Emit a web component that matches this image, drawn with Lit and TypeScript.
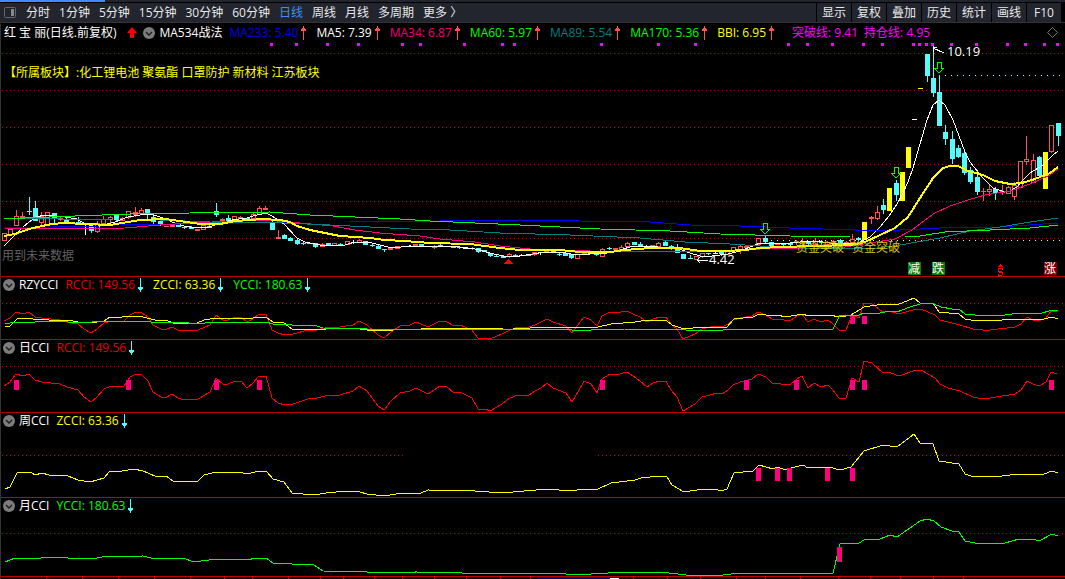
import { LitElement, html, svg, css } from "lit";
import { customElement, property } from "lit/decorators.js";
import { styleMap } from "lit/directives/style-map.js";

interface Reading {
  label: string;
  value: string;
  color: string;
  trend?: "up" | "down";
}

const PERIODS = ["分时", "1分钟", "5分钟", "15分钟", "30分钟", "60分钟", "日线", "周线", "月线", "多周期", "更多 〉"];
const TOOLS = ["显示", "复权", "叠加", "历史", "统计", "画线", "F10"];

const AVERAGES: Reading[] = [
  { label: "MA233", value: "5.40", color: "#0000e6", trend: "up" },
  { label: "MA5", value: "7.39", color: "#ffffff", trend: "up" },
  { label: "MA34", value: "6.87", color: "#f0007a", trend: "up" },
  { label: "MA60", value: "5.97", color: "#00ff00", trend: "up" },
  { label: "MA89", value: "5.54", color: "#008080", trend: "up" },
  { label: "MA170", value: "5.36", color: "#00ff00", trend: "up" },
  { label: "BBI", value: "6.95", color: "#ffff00", trend: "up" },
];
const LEVELS: Reading[] = [
  { label: "突破线", value: "9.41", color: "#ff00ff" },
  { label: "持仓线", value: "4.95", color: "#ff00ff" },
];
const RCCI: Reading = { label: "RCCI", value: "149.56", color: "#e60000", trend: "down" };
const ZCCI: Reading = { label: "ZCCI", value: "63.36", color: "#ffff00", trend: "down" };
const YCCI: Reading = { label: "YCCI", value: "180.63", color: "#00ff00", trend: "down" };

// Line series, "x,y" pairs
const MA5 = "4,246 10,240 22,228 29,222 36,217 45,215 65,217 77,219 85,224 97,227 103,225 115,222 128,217 140,215 150,214 160,217 172,222 184,226 197,228 209,227 220,223 232,220 247,218 253,216 266,213 272,216 284,224 297,238 305,242 320,245 345,245 355,242 368,242 380,245 392,248 410,246 460,247 475,249 490,253 503,256 520,256 533,254 546,252 560,252 577,255 590,254 607,253 620,250 633,246 650,246 665,248 677,248 690,253 700,256 712,256 728,254 740,251 750,247 760,243 790,243 800,242 815,241 830,243 850,243 858,243 870,237 880,227 889,216 897,204 902,195 908,182 913,168 927,120 933,105 939,100 945,105 953,120 965,152 970,162 983,178 993,188 1002,191 1010,191 1017,187 1022,181 1030,173 1043,165 1053,155 1058,151";
const BBI = "4,236 15,234 29,229 42,226 52,224 65,223 85,224 110,225 128,222 140,220 165,219 180,221 200,224 220,224 235,221 250,220 262,219 280,220 290,222 297,226 310,230 325,233 340,236 370,238 385,240 405,241 430,243 470,244 485,246 500,248 520,250 560,250 580,252 610,252 625,250 650,248 680,248 700,251 725,251 745,250 760,248 780,247 850,245 865,242 880,235 895,228 908,217 920,198 933,178 943,168 950,166 958,166 968,171 983,175 995,181 1010,184 1022,183 1035,179 1050,173 1058,167";
const MA34 = "4,228 72,229 125,228 160,225 190,223 235,221 265,220 300,223 333,226 355,230 380,233 420,236 440,239 475,242 500,246 530,249 590,251 635,251 680,252 740,250 780,248 790,249 845,247 870,243 895,239 912,230 933,214 950,206 968,200 985,195 1010,191 1030,184 1050,175 1058,169";
const MA233 = "4,228 50,227 100,226 130,224 180,224 240,223 290,222 350,222 360,221 440,221 520,220 580,221 650,222 690,225 740,226 790,228 855,230 900,230 940,228 1000,227 1058,223";
const MA170 = "4,219 25,218 75,216 130,214 190,213 270,212 310,215 400,219 430,221 520,225 560,227 600,229 670,231 720,234 790,236 850,237 905,237 920,236 945,232 990,230 1030,228 1058,225";
const MA89 = "4,218 60,219 110,220 160,220 210,222 260,222 330,225 410,229 450,230 500,233 570,235 640,238 685,242 730,244 760,246 800,248 870,249 900,245 940,238 970,231 1000,227 1030,222 1058,218";

const DAY = "4,386 10,382 16,374 23,376 29,374 35,380 42,382 60,384 67,387 78,390 84,397 91,402 97,397 104,389 111,386 124,386 130,377 136,374 142,375 148,381 153,392 161,397 167,397 172,394 178,398 184,400 198,399 210,392 216,378 223,384 228,384 235,381 241,381 247,388 253,383 259,376 266,376 272,398 278,403 285,405 293,404 308,399 317,398 325,396 340,395 353,391 359,386 367,391 378,406 384,410 391,401 400,393 410,391 416,388 428,394 440,386 447,387 454,393 460,392 472,398 478,409 485,409 490,411 502,404 510,398 518,395 529,395 535,391 541,388 547,383 553,388 566,393 572,402 578,392 584,381 591,384 597,393 602,379 610,374 616,375 627,372 633,376 640,381 647,387 653,383 660,381 666,381 671,390 677,397 683,411 695,404 702,397 710,395 717,393 722,394 728,390 733,385 740,382 752,379 758,374 766,377 772,383 778,383 784,385 791,384 797,379 802,376 808,388 814,383 821,387 828,385 833,390 839,398 846,398 852,378 859,382 864,361 872,363 883,373 889,372 896,375 902,375 913,371 921,370 928,374 935,378 940,384 948,388 960,391 973,397 983,399 990,398 1015,394 1021,390 1027,381 1033,384 1039,386 1046,382 1051,372 1057,374";
const WEEK = "5,489 10,487 17,473 31,472 35,475 42,473 49,475 68,476 78,480 90,482 104,478 110,471 122,471 134,469 143,471 155,476 166,476 173,481 197,482 204,475 216,472 232,473 238,472 248,474 258,471 267,472 273,479 284,482 292,493 314,495 326,493 346,491 360,492 367,494 385,496 401,493 421,493 428,490 475,491 503,493 513,492 547,489 570,491 584,489 598,489 611,483 635,480 641,478 659,476 667,477 672,485 684,492 703,489 715,489 721,491 727,489 734,473 753,471 759,465 773,469 778,467 785,470 791,468 803,465 808,468 829,467 840,470 851,467 864,451 883,445 897,447 914,434 920,443 933,444 939,461 959,464 965,474 971,476 1002,476 1019,474 1044,474 1052,471 1058,473";
const MONTH = "5,562 15,558 35,559 48,557 68,558 92,559 102,557 143,556 151,558 183,558 194,562 216,559 228,560 238,559 246,560 257,558 266,558 273,563 292,564 314,565 323,571 367,572 384,573 416,572 462,573 489,574 510,573 560,573 572,575 591,574 625,572 645,573 660,572 669,573 686,575 723,575 740,573 815,573 833,573 840,544 859,543 864,540 880,539 890,535 897,537 910,528 920,521 927,519 934,521 941,527 952,531 959,532 965,541 975,543 1005,543 1019,539 1033,539 1039,541 1052,534 1058,536";

// Candles: x, high, body top, body bottom, low, kind
// r rising, f rising and filled, c falling, y limit-up, w unchanged
type Kind = "r" | "f" | "c" | "y" | "w";
const CANDLES: [number, number, number, number, number, Kind][] = (
  "4 233 233 241 241 r;10 229 229 235 235 r;16 210 216 226 226 r;22 212 216 218 218 r;29 197 211 212 215 c;35 201 208 221 221 c;41 212 216 223 225 r;47 212 212 225 225 r;54 213 213 219 224 c;60 216 218 220 221 r;66 217 219 222 223 c;72 222 222 224 224 r;78 217 222 225 225 c;85 225 226 227 235 w;91 226 226 231 233 c;97 221 223 232 233 r;103 216 219 224 224 r;110 216 217 220 224 r;116 215 215 220 222 c;122 217 218 221 221 r;128 211 211 218 219 r;135 207 212 215 217 r;141 208 210 214 214 r;147 209 209 215 219 c;153 214 217 222 224 c;160 220 221 225 226 c;166 226 226 227 227 r;172 224 225 227 227 r;178 224 224 227 227 c;184 227 227 228 229 c;191 226 227 229 229 c;197 229 229 231 231 f;203 224 225 230 230 r;209 225 226 228 228 c;216 203 211 215 217 c;222 218 219 221 221 r;228 215 218 221 222 c;234 216 216 220 220 r;240 216 217 222 223 r;247 217 218 220 221 c;253 213 214 219 220 r;259 206 208 215 215 r;265 206 208 210 210 f;272 221 223 230 230 c;278 230 237 239 239 r;284 234 235 239 239 c;290 237 238 241 241 c;297 238 240 244 245 c;303 241 243 244 245 c;309 242 243 244 244 c;315 243 243 247 248 c;322 243 244 247 247 r;328 243 243 245 245 c;334 243 243 246 246 r;340 243 244 245 245 c;347 241 241 245 245 r;353 240 242 243 244 w;359 239 240 243 243 r;365 241 241 245 245 c;372 244 245 246 247 c;378 245 246 249 249 c;384 249 249 250 252 c;390 248 248 250 250 f;397 246 246 249 249 r;403 246 246 247 247 f;409 245 246 247 247 w;415 244 244 246 246 r;421 244 244 246 247 c;428 246 246 247 247 f;434 245 246 248 249 r;440 244 245 246 247 c;446 246 246 247 247 c;453 246 247 248 248 c;459 246 247 248 249 c;465 247 248 249 249 w;472 247 248 249 250 r;478 248 248 252 253 c;484 250 250 252 252 c;490 253 253 256 257 c;496 254 256 257 257 c;503 255 256 258 258 c;509 253 254 257 258 r;515 254 255 256 256 c;521 254 255 256 256 w;528 254 255 256 256 c;534 252 252 255 256 r;540 252 252 253 255 w;546 251 251 253 253 r;553 250 251 252 253 c;559 253 254 255 256 c;565 253 253 256 256 c;571 254 254 258 259 c;577 254 254 259 259 r;584 252 253 255 255 r;590 252 252 254 254 w;596 252 253 255 256 c;602 248 249 257 257 r;609 247 248 249 250 c;615 248 248 250 251 r;621 245 247 250 250 r;627 242 243 247 248 r;634 242 242 245 245 c;640 242 244 246 247 c;646 245 246 247 247 w;652 245 245 247 247 f;658 242 243 247 247 r;665 241 242 246 246 c;671 245 246 247 250 c;677 244 249 253 253 c;683 254 254 259 259 c;690 255 258 259 259 c;696 256 256 260 260 r;702 253 253 257 258 r;708 253 253 254 255 c;715 252 253 254 254 w;721 250 252 254 256 c;727 251 251 255 255 r;733 247 247 251 251 r;740 245 246 250 254 r;746 246 246 248 248 f;752 245 245 246 247 w;758 238 238 245 245 r;765 236 238 242 243 c;771 242 242 246 246 c;777 243 244 245 245 r;783 243 244 245 246 c;790 242 243 245 246 c;796 240 241 243 245 r;802 238 241 244 245 r;808 241 242 244 245 c;815 238 241 245 246 r;821 240 242 243 244 c;827 241 242 245 246 r;833 240 241 243 244 r;840 239 240 245 246 c;846 241 242 244 245 r;852 234 239 243 243 r;858 237 238 240 241 c;864 222 222 240 240 y;871 216 217 219 224 r;877 206 212 219 220 r;883 199 205 210 214 c;889 188 188 211 211 y;896 180 183 195 201 c;902 172 172 201 201 y;908 147 147 168 168 y;914 119 119 120 120 w;920 88 88 89 89 y;927 54 54 76 82 c;933 46 78 93 97 c;939 75 92 126 126 c;945 125 132 139 145 c;952 131 139 159 164 c;958 145 148 157 158 c;964 152 153 173 175 c;970 167 170 182 184 c;977 175 177 192 195 c;983 188 191 192 201 r;989 185 189 192 196 r;995 187 189 193 200 c;1002 185 191 193 195 r;1008 186 187 194 194 r;1014 182 185 197 200 r;1020 161 161 188 188 r;1026 136 159 162 165 r;1033 154 160 183 183 r;1039 156 157 176 176 c;1045 152 152 189 189 y;1051 125 125 152 153 r;1058 123 123 136 146 c"
).split(";").map((row) => {
  const f = row.split(" ");
  return [+f[0], +f[1], +f[2], +f[3], +f[4], f[5] as Kind];
});
const CANDLE_COLORS: Record<Kind, string> = { r: "#ff5252", f: "#ff5252", c: "#54fcfc", y: "#ffff00", w: "#ffffff" };

const MARKS = [271, 296, 327, 358, 402, 420, 464, 502, 514, 601, 658, 695, 788, 807, 832, 863, 882, 913, 919, 926, 932, 951, 976, 1007, 1025, 1044, 1057];
const TICKS = [46, 82, 118, 154, 190, 224, 252, 288, 320, 343, 374, 402, 434, 466, 500, 530, 633, 667, 700, 736, 765, 800, 838, 870, 900, 933, 963];

// Maps a series onto the shared scale of the combined panel
const rescale = (points: string, from: number, factor: number) =>
  points
    .split(" ")
    .map((p) => p.split(",").map(Number))
    .map(([x, y]) => `${x},${Math.round(303 + (y - from) * factor)}`)
    .join(" ");

const line = (points: string, color: string, width = 1) =>
  svg`<polyline points=${points} fill="none" stroke=${color} stroke-width=${width} />`;
const dots = (y: number, color = "#c80000", x1 = 2, x2 = 1065, step = 3) =>
  svg`<path d="M${x1} ${y}.5H${x2}" stroke=${color} stroke-dasharray="1 ${step}" />`;
const bars = (xs: number[], y: number, height: number) =>
  xs.map((x) => svg`<rect x=${x - 2} y=${y} width="5" height=${height} fill="#ff0080" />`);
const floor = (y: number) => svg`<rect x="0" y=${y} width="1065" height="1" fill="#c00000" />`;

const candle = ([x, hi, top, bottom, lo, kind]: (typeof CANDLES)[number]) => {
  const color = CANDLE_COLORS[kind];
  return svg`
    <rect x=${x} y=${hi} width="1" height=${lo - hi} fill=${color} />
    <rect x=${x - 2} y=${top} width="5" height=${bottom - top} fill=${color} />
    ${kind === "r" && bottom - top > 2
      ? svg`<rect x=${x - 1} y=${top + 1} width="3" height=${bottom - top - 2} fill="#000" />`
      : ""}`;
};
const sellArrow = (x: number, y: number) =>
  svg`<path d="M${x - 2} ${y}h4v6h3l-5 5l-5 -5h3z" fill="none" stroke="#00ff00" />`;
const badge = (x: number, text: string, color: string) => svg`
  <rect x=${x} y="262" width="13" height="13" fill=${color} />
  <text class="note" x=${x} y="273" fill="#fff">${text}</text>`;

@customElement("trend-arrow")
class TrendArrow extends LitElement {
  @property() direction: "up" | "down" = "up";
  static styles = css`
    :host { display: block; width: 5px; height: 14px; }
    svg { display: block; }
  `;
  render() {
    return this.direction === "up"
      ? html`<svg width="5" height="14" shape-rendering="crispEdges" fill="#ff5252"><path d="M2 0h1v14H2zM1 2h3v1H1zM0 3h5v2H0z" /></svg>`
      : html`<svg width="5" height="14" shape-rendering="crispEdges" fill="#54fcfc"><path d="M2 0h1v14H2zM0 9h5v2H0zM1 11h3v1H1z" /></svg>`;
  }
}

@customElement("indicator-legend")
class IndicatorLegend extends LitElement {
  @property() name = "";
  @property({ attribute: false }) readings: Reading[] = [];
  static styles = css`
    :host { display: flex; align-items: center; gap: 4px; white-space: nowrap; min-width: 0; }
    .toggle { display: block; width: 12px; height: 12px; padding: 0; border: 0; background: none; flex: none; cursor: pointer; }
    .toggle svg { display: block; }
    .name { color: #fff; }
    .readings { display: flex; gap: 10px; padding-left: 3px; }
    .reading { display: flex; align-items: center; gap: 3px; }
  `;
  render() {
    return html`
      <button class="toggle" aria-label="${this.name} 菜单">
        <svg width="12" height="12" viewBox="0 0 12 12">
          <circle cx="6" cy="6" r="6" fill="#7c7c7c" />
          <path d="M3 5l3 3l3-3" fill="none" stroke="#1c1c1c" stroke-width="1.4" />
        </svg>
      </button>
      <span class="name">${this.name}</span>
      <div class="readings">
        ${this.readings.map(
          (r) => html`<span class="reading" style=${styleMap({ color: r.color })}>
            <span>${r.label}: ${r.value}</span>
            ${r.trend ? html`<trend-arrow direction=${r.trend}></trend-arrow>` : ""}
          </span>`,
        )}
      </div>`;
  }
}

@customElement("app-root")
class AppRoot extends LitElement {
  static styles = css`
    :host {
      display: block;
      background: #000;
      color: #fff;
      font: 12px/16px "Open Sans", "Noto Sans CJK SC", sans-serif;
      overflow: hidden;
    }
    .strip { display: flex; height: 2px; background: #22252e; }
    .strip-on { width: 105px; background: #3f8cff; }
    .toolbar {
      display: flex;
      justify-content: space-between;
      height: 21px;
      background: #22252e;
      border-top: 1px solid #000;
      border-bottom: 1px solid #333;
      box-sizing: border-box;
    }
    button { font: inherit; color: #e8e8e8; background: none; border: 0; padding: 0; white-space: nowrap; cursor: pointer; }
    .periods { display: flex; align-items: center; gap: 9px; padding-left: 4px; }
    .layout { width: 13px; height: 12px; }
    .layout svg { display: block; }
    .on { color: #3f8cff; }
    .tools { display: flex; gap: 1px; background: #000; padding: 0 4px 0 1px; }
    .tool { width: 34px; background: #22252e; }
    .body { border-left: 1px solid #333; border-top: 1px solid #000; }
    .info { display: flex; align-items: center; height: 19px; padding: 0 7px 2px 3px; box-sizing: border-box; white-space: nowrap; }
    .stock { padding-right: 11px; }
    .rise { padding-right: 6px; }
    .levels { display: flex; gap: 6px; color: #ff00ff; padding-left: 18px; flex: 1; }
    .head { display: flex; height: 16px; padding-left: 2px; }
    .plot { display: block; width: 100%; height: auto; }
    .note { font-size: 12px; }
    .price { font-size: 13px; }
  `;

  render() {
    return html`
      <div class="strip"><div class="strip-on"></div></div>
      <nav class="toolbar">
        <div class="periods">
          <button class="layout" aria-label="布局">
            <svg width="12" height="12" viewBox="0 0 12 12">
              <rect x="0.5" y="0.5" width="11" height="10" rx="1" fill="none" stroke="#666" />
              <rect x="7" y="2" width="3" height="7" fill="#888" />
            </svg>
          </button>
          ${PERIODS.map((p) => html`<button class=${p === "日线" ? "on" : ""}>${p}</button>`)}
        </div>
        <div class="tools">${TOOLS.map((t) => html`<button class="tool">${t}</button>`)}</div>
      </nav>
      <main class="body">
        <section>
          <div class="info">
            <span class="stock">红 宝 丽(日线.前复权)</span>
            <svg class="rise" width="10" height="11" viewBox="0 0 10 11"><path d="M5 0l5 6H7v5H3V6H0z" fill="#ff0000" /></svg>
            <indicator-legend name="MA534战法" .readings=${AVERAGES}></indicator-legend>
            <div class="levels">${LEVELS.map((l) => html`<span>${l.label}: ${l.value}</span>`)}</div>
            <svg width="11" height="11" viewBox="0 0 11 11"><path d="M5.500 .5l5 5l-5 5l-5-5z" fill="none" stroke="#777" /></svg>
          </div>
          ${this.priceChart()}
        </section>
        <section>
          <div class="head"><indicator-legend name="RZYCCI" .readings=${[RCCI, ZCCI, YCCI]}></indicator-legend></div>
          <svg class="plot" viewBox="1 293 1064 47" shape-rendering="crispEdges">
            ${dots(303)} ${bars([852, 864], 316, 8)} ${line(rescale(DAY, 361, 0.72), "#ff0000")}
            ${line(rescale(WEEK, 443.5, 0.527), "#ffff00")} ${line(rescale(MONTH, 519, 0.482), "#00ff00")} ${floor(339)}
          </svg>
        </section>
        <section>
          <div class="head"><indicator-legend name="日CCI" .readings=${[RCCI]}></indicator-legend></div>
          <svg class="plot" viewBox="1 356 1064 57" shape-rendering="crispEdges">
            ${dots(366)} ${line(DAY, "#ff0000")}
            ${bars([16, 128, 216, 259, 602, 746, 796, 852, 864, 1051], 380, 10)} ${floor(412)}
          </svg>
        </section>
        <section>
          <div class="head"><indicator-legend name="周CCI" .readings=${[ZCCI]}></indicator-legend></div>
          <svg class="plot" viewBox="1 429 1064 69" shape-rendering="crispEdges">
            ${dots(455, "#c80000", 2, 404)} ${dots(455, "#c80000", 598)} ${line(WEEK, "#ffff00")}
            ${bars([758, 777, 789, 827, 852], 468, 13)} ${floor(497)}
          </svg>
        </section>
        <section>
          <div class="head"><indicator-legend name="月CCI" .readings=${[YCCI]}></indicator-legend></div>
          <svg class="plot" viewBox="1 514 1064 65" shape-rendering="crispEdges">
            ${dots(533)} ${line(MONTH, "#00ff00")} ${bars([839], 547, 15)} ${floor(576)}
            ${TICKS.map((x) => svg`<rect x=${x} y="577" width="1" height="2" fill="#c00000" />`)}
            <rect x="537" y="577" width="83" height="2" fill="#000080" />
            <rect x="610" y="578" width="9" height="1" fill="#fff" />
          </svg>
        </section>
      </main>`;
  }

  private priceChart() {
    return html`<svg class="plot" viewBox="1 43 1064 234" shape-rendering="crispEdges">
      ${[53, 90, 127, 164, 201, 238].map((y) => dots(y))}
      ${dots(75, "#ffff60", 945, 1060, 5)} ${dots(240, "#ffff60", 771, 1060, 5)}
      ${MARKS.map((x) => svg`<rect x=${x - 1} y="43" width="3" height="3" fill="#ff00ff" />`)}
      ${CANDLES.map(candle)}
      ${line(MA5, "#ffffff")} ${line(MA233, "#0000ff")} ${line(MA34, "#ff0080")} ${line(MA89, "#008080")}
      ${line(MA170, "#00ff00")} ${line(BBI, "#ffff00", 2)}
      ${[[939, 62], [896, 167], [765, 223]].map(([x, y]) => sellArrow(x, y))}
      <path d="M944 53L933 48M937 47H933V52" fill="none" stroke="#fff" />
      <path d="M708 260H697M700 257L697 260L700 263" fill="none" stroke="#fff" />
      <path d="M504 264h9l-4-5h-1z" fill="#ff0000" />
      <text class="price" x="947" y="56" fill="#fff">10.19</text>
      <text class="price" x="709" y="264" fill="#fff">4.42</text>
      <text class="note" x="4" y="77" fill="#ffff00">【所属板块】:化工锂电池 聚氨酯 口罩防护 新材料 江苏板块</text>
      <text class="note" x="2" y="260" fill="#606060">用到未来数据</text>
      <text class="note" x="796" y="252" fill="#d8c800">资金突破</text>
      <text class="note" x="852" y="252" fill="#d8c800">资金突破</text>
      ${badge(908, "减", "#008000")} ${badge(932, "跌", "#008000")} ${badge(1044, "涨", "#800000")}
      <path d="M1000 264h1v1h1v1h1v1h-5v-1h1v-1h1zM998 268h5v2h-1v-1h-3v2h3v1h1v3h-1v1h-4v-2h1v1h3v-2h-3v-1h-1z" fill="#ff0000" />
      ${floor(276)}
    </svg>`;
  }
}
